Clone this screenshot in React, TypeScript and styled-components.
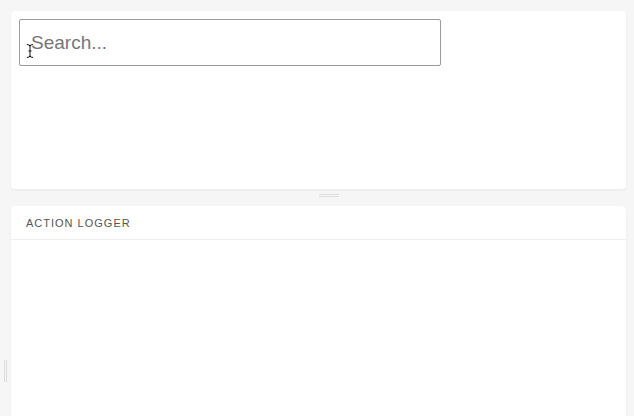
import React from "react";
import styled, { createGlobalStyle } from "styled-components";

const GlobalStyle = createGlobalStyle`
  html, body {
    margin: 0;
    padding: 0;
    background: #f6f6f6;
    font-family: "Liberation Sans", Arial, sans-serif;
  }
  * { box-sizing: border-box; }
`;

const Shell = styled.div`
  display: flex;
  width: 634px;
  height: 416px;
  overflow: hidden;
  background: #f6f6f6;
`;

const Gutter = styled.div`
  width: 11px;
  display: flex;
  flex-direction: column;
  justify-content: flex-end;
  align-items: center;
  padding-bottom: 34px;
`;

const VGrip = styled.div`
  width: 3px;
  height: 22px;
  border-left: 1px solid #dcdcdc;
  border-right: 1px solid #dcdcdc;
  margin-left: -1px;
`;

const Main = styled.div`
  flex: 1;
  display: flex;
  flex-direction: column;
  padding: 11px 8px 0 0;
`;

const Panel = styled.div<{ $grow?: boolean }>`
  background: #fff;
  border-radius: 4px;
  box-shadow: 0 1px 3px rgba(0, 0, 0, 0.06);
  ${(p) => (p.$grow ? "flex: 1; border-bottom-left-radius: 0; border-bottom-right-radius: 0;" : "height: 178px;")}
  display: flex;
  flex-direction: column;
`;

const Preview = styled.div`
  padding: 8px;
`;

const InputWrap = styled.div`
  position: relative;
  width: 422px;
`;

const SearchInput = styled.input`
  width: 100%;
  height: 47px;
  border: 1px solid #9a9a9a;
  border-radius: 2px;
  padding: 0 11px;
  font-family: "Liberation Sans", Arial, sans-serif;
  font-size: 19px;
  color: #333;
  outline: none;
  &::placeholder {
    color: #767676;
  }
`;

const Caret = styled.svg`
  position: absolute;
  left: 7px;
  top: 24px;
  pointer-events: none;
`;

const Divider = styled.div`
  height: 17px;
  display: flex;
  align-items: flex-start;
  justify-content: center;
  padding: 5px 0 0 20px;
`;

const HGrip = styled.div`
  width: 20px;
  height: 3px;
  border-top: 1px solid #dedede;
  border-bottom: 1px solid #dedede;
`;

const PanelHeader = styled.div`
  height: 34px;
  display: flex;
  align-items: center;
  padding: 1px 0 0 15px;
  border-bottom: 1px solid #efefef;
  font-size: 11px;
  letter-spacing: 1px;
  color: #555;
`;

export default function App() {
  return (
    <>
      <GlobalStyle />
      <Shell>
        <Gutter>
          <VGrip />
        </Gutter>
        <Main>
          <Panel>
            <Preview>
              <InputWrap>
                <SearchInput placeholder="Search..." />
                <Caret width="8" height="16" viewBox="0 0 8 16">
                  <path
                    d="M1 1.5 Q4 1.5 4 3.5 L4 12.5 Q4 14.5 1 14.5 M7 1.5 Q4 1.5 4 3.5 M4 12.5 Q4 14.5 7 14.5 M2.5 8 L5.5 8"
                    fill="none"
                    stroke="#fff"
                    strokeWidth="2.4"
                  />
                  <path
                    d="M1 1.5 Q4 1.5 4 3.5 L4 12.5 Q4 14.5 1 14.5 M7 1.5 Q4 1.5 4 3.5 M4 12.5 Q4 14.5 7 14.5 M2.5 8 L5.5 8"
                    fill="none"
                    stroke="#111"
                    strokeWidth="1"
                  />
                </Caret>
              </InputWrap>
            </Preview>
          </Panel>
          <Divider>
            <HGrip />
          </Divider>
          <Panel $grow>
            <PanelHeader>ACTION LOGGER</PanelHeader>
          </Panel>
        </Main>
      </Shell>
    </>
  );
}
